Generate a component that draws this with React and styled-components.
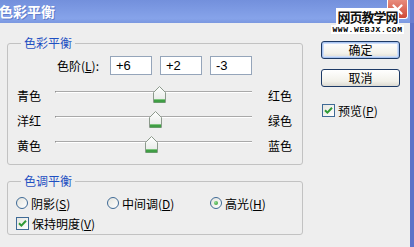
import styled, { createGlobalStyle } from 'styled-components'

const GlobalStyle = createGlobalStyle`
  html, body {
    margin: 0;
    padding: 0;
    background: #eeeeee;
  }
  body {
    font-family: "Noto Sans CJK SC", "Liberation Sans", sans-serif;
    font-size: 12px;
    color: #000;
  }
`

const sliders = [
  { left: '青色', right: '红色', value: 6 },
  { left: '洋红', right: '绿色', value: 2 },
  { left: '黄色', right: '蓝色', value: -3 },
]

const tones = [
  { label: '阴影', key: 'S', checked: false },
  { label: '中间调', key: 'D', checked: false },
  { label: '高光', key: 'H', checked: true },
]

const TRACK = 197

function Thumb() {
  return (
    <svg width="13" height="17" viewBox="0 0 13 17">
      <defs>
        <linearGradient id="thumbFill" x1="0" y1="0" x2="0" y2="1">
          <stop offset="0" stopColor="#ffffff" />
          <stop offset="1" stopColor="#e4e8e4" />
        </linearGradient>
      </defs>
      <path d="M0.5 6.5 L6.5 0.5 L12.5 6.5 L12.5 16.5 L0.5 16.5 Z" fill="url(#thumbFill)" stroke="#8c9a8c" />
      <rect x="1" y="13" width="11" height="3.5" fill="#3f9e44" />
      <rect x="1" y="13" width="11" height="1" fill="#7cc47c" />
    </svg>
  )
}

function CheckMark() {
  return (
    <svg width="9" height="9" viewBox="0 0 9 9">
      <path d="M1 4.2 L3.4 6.6 L8 1.8" fill="none" stroke="#2f9a35" strokeWidth="2" />
    </svg>
  )
}

function CloseIcon() {
  return (
    <svg width="11" height="11" viewBox="0 0 11 11">
      <path d="M1.5 1.5 L9.5 9.5 M9.5 1.5 L1.5 9.5" stroke="#ffffff" strokeWidth="2.2" strokeLinecap="round" />
    </svg>
  )
}

function App() {
  return (
    <Window>
      <GlobalStyle />
      <TitleBar>
        <Title>色彩平衡</Title>
        <CloseButton><CloseIcon /></CloseButton>
      </TitleBar>
      <Watermark>
        <WatermarkTitle>网页教学网</WatermarkTitle>
        <WatermarkUrl>WWW.WEBJX.COM</WatermarkUrl>
      </Watermark>
      <Main>
        <LeftColumn>
          <Group $height={130}>
            <Legend>色彩平衡</Legend>
            <LevelRow>
              <LevelLabel>色阶(<u>L</u>):</LevelLabel>
              <LevelInput defaultValue="+6" />
              <LevelInput defaultValue="+2" />
              <LevelInput defaultValue="-3" />
            </LevelRow>
            <Sliders>
              {sliders.map((s) => (
                <SliderRow key={s.left}>
                  <span>{s.left}</span>
                  <Track>
                    <ThumbHolder style={{ left: `${((s.value + 100) / 200) * TRACK - 6}px` }}>
                      <Thumb />
                    </ThumbHolder>
                  </Track>
                  <RightLabel>{s.right}</RightLabel>
                </SliderRow>
              ))}
            </Sliders>
          </Group>
          <Group $height={62} $gap={8}>
            <Legend>色调平衡</Legend>
            <RadioRow>
              {tones.map((t) => (
                <Choice key={t.key}>
                  <Radio $checked={t.checked} />
                  <span>{t.label}(<u>{t.key}</u>)</span>
                </Choice>
              ))}
            </RadioRow>
            <CheckRow>
              <Choice>
                <CheckBox><CheckMark /></CheckBox>
                <span>保持明度(<u>V</u>)</span>
              </Choice>
            </CheckRow>
          </Group>
        </LeftColumn>
        <RightColumn>
          <Button $default>确定</Button>
          <Button>取消</Button>
          <PreviewRow>
            <Choice>
              <CheckBox><CheckMark /></CheckBox>
              <span>预览(<u>P</u>)</span>
            </Choice>
          </PreviewRow>
        </RightColumn>
      </Main>
    </Window>
  )
}

export default App

/////  Style  /////

const Window = styled.div`
  position: relative;
  width: 414px;
  height: 247px;
  display: flex;
  flex-direction: column;
  background: #eeeeee;
  overflow: hidden;
`

const TitleBar = styled.div`
  height: 23px;
  flex: none;
  display: flex;
  align-items: flex-start;
  justify-content: space-between;
  background: linear-gradient(#7390dc, #86a3ea 80%, #7b98e0);
  border-right: 4px solid #6a7ed0;
  box-sizing: border-box;
`

const Title = styled.div`
  margin-left: -1px;
  line-height: 23px;
  font-size: 14px;
  font-weight: 700;
  color: #ffffff;
  text-shadow: 1px 1px 0 #5f7ccb;
`

const CloseButton = styled.div`
  width: 21px;
  height: 19px;
  margin-right: 2px;
  border: 1px solid #ffffff;
  border-top: none;
  border-radius: 0 0 3px 3px;
  background: linear-gradient(#e88c7c, #cf4a38);
  display: flex;
  align-items: center;
  justify-content: center;
  box-sizing: border-box;
`

const Watermark = styled.div`
  position: absolute;
  top: 8px;
  left: 331px;
  width: 73px;
  display: flex;
  flex-direction: column;
  align-items: center;
`

const WatermarkTitle = styled.div`
  background: #ffffff;
  padding: 0 1px;
  font-size: 13px;
  line-height: 17px;
  font-weight: 700;
  color: #111111;
  letter-spacing: -1px;
  white-space: nowrap;
`

const WatermarkUrl = styled.div`
  width: 100%;
  background: #ffffff;
  text-align: center;
  font: 700 8px/9px "Liberation Mono", monospace;
  letter-spacing: 0.6px;
  color: #000000;
  white-space: nowrap;
`

const Main = styled.div`
  flex: 1;
  display: flex;
  border-right: 4px solid #5e72c8;
`

const LeftColumn = styled.div`
  width: 296px;
  flex: none;
  padding: 12px 0 0 7px;
  display: flex;
  flex-direction: column;
`

const Group = styled.fieldset`
  margin: ${(p) => p.$gap || 0}px 0 0;
  padding: 0;
  height: ${(p) => p.$height}px;
  box-sizing: border-box;
  border: 1px solid #c2c2c2;
  border-radius: 3px;
  min-width: 0;
`

const Legend = styled.legend`
  margin-left: 13px;
  padding: 0 3px;
  line-height: 16px;
  font-size: 12px;
  color: #1f50c2;
`

const LevelRow = styled.div`
  display: flex;
  align-items: center;
  gap: 8px;
  margin: 5px 0 0 49px;
`

const LevelLabel = styled.span`
  width: 45px;
  white-space: nowrap;
`

const LevelInput = styled.input`
  width: 42px;
  height: 19px;
  box-sizing: border-box;
  border: 1px solid #95a5ba;
  padding: 0 5px;
  font: 13px "Liberation Sans", sans-serif;
  background: #ffffff;
  outline: none;
`

const Sliders = styled.div`
  margin-top: 8px;
  display: flex;
  flex-direction: column;
`

const SliderRow = styled.div`
  display: grid;
  grid-template-columns: 38px ${TRACK}px auto;
  align-items: center;
  height: 25px;
  padding-left: 9px;
  white-space: nowrap;
`

const RightLabel = styled.span`
  padding-left: 16px;
`

const Track = styled.div`
  position: relative;
  align-self: stretch;
  &::before {
    content: '';
    position: absolute;
    left: 0;
    right: 0;
    top: 8px;
    height: 1px;
    background: #a9a9a9;
    border-bottom: 1px solid #ffffff;
    border-left: 1px solid #909090;
  }
`

const ThumbHolder = styled.div`
  position: absolute;
  top: 3px;
  width: 13px;
  height: 17px;
  line-height: 0;
`

const RadioRow = styled.div`
  display: grid;
  grid-template-columns: 91px 103px auto;
  height: 20px;
  align-items: center;
  margin: 4px 0 0 8px;
`

const CheckRow = styled.div`
  height: 20px;
  display: flex;
  align-items: center;
  margin-left: 8px;
`

const Choice = styled.label`
  display: flex;
  align-items: center;
  gap: 3px;
  white-space: nowrap;
`

const Radio = styled.span`
  width: 12px;
  height: 12px;
  box-sizing: border-box;
  border-radius: 50%;
  border: 1px solid #3f6a96;
  background: linear-gradient(135deg, #e4e4de, #ffffff);
  display: flex;
  align-items: center;
  justify-content: center;
  &::after {
    content: '';
    display: ${(p) => (p.$checked ? 'block' : 'none')};
    width: 4px;
    height: 4px;
    border-radius: 50%;
    background: radial-gradient(circle at 35% 35%, #8fdc8f, #2b942e);
  }
`

const CheckBox = styled.span`
  width: 13px;
  height: 13px;
  box-sizing: border-box;
  border: 1px solid #3f6a96;
  background: linear-gradient(135deg, #e6e6e0, #ffffff);
  display: flex;
  align-items: center;
  justify-content: center;
`

const RightColumn = styled.div`
  display: flex;
  flex-direction: column;
  padding: 18px 0 0 18px;
  gap: 10px;
`

const Button = styled.div`
  width: 79px;
  height: 18px;
  box-sizing: border-box;
  border: 1px solid #1d3a66;
  border-radius: 3px;
  background: linear-gradient(#ffffff, #f2f1ea 70%, #dcdad2);
  box-shadow: ${(p) => (p.$default ? 'inset 0 0 0 1px #a8c4f0, inset 0 0 0 2px #cfdef8' : 'none')};
  text-align: center;
  line-height: 16px;
  font-size: 12px;
`

const PreviewRow = styled.div`
  height: 20px;
  display: flex;
  align-items: center;
  margin-top: 3px;
  padding-left: 1px;
`
